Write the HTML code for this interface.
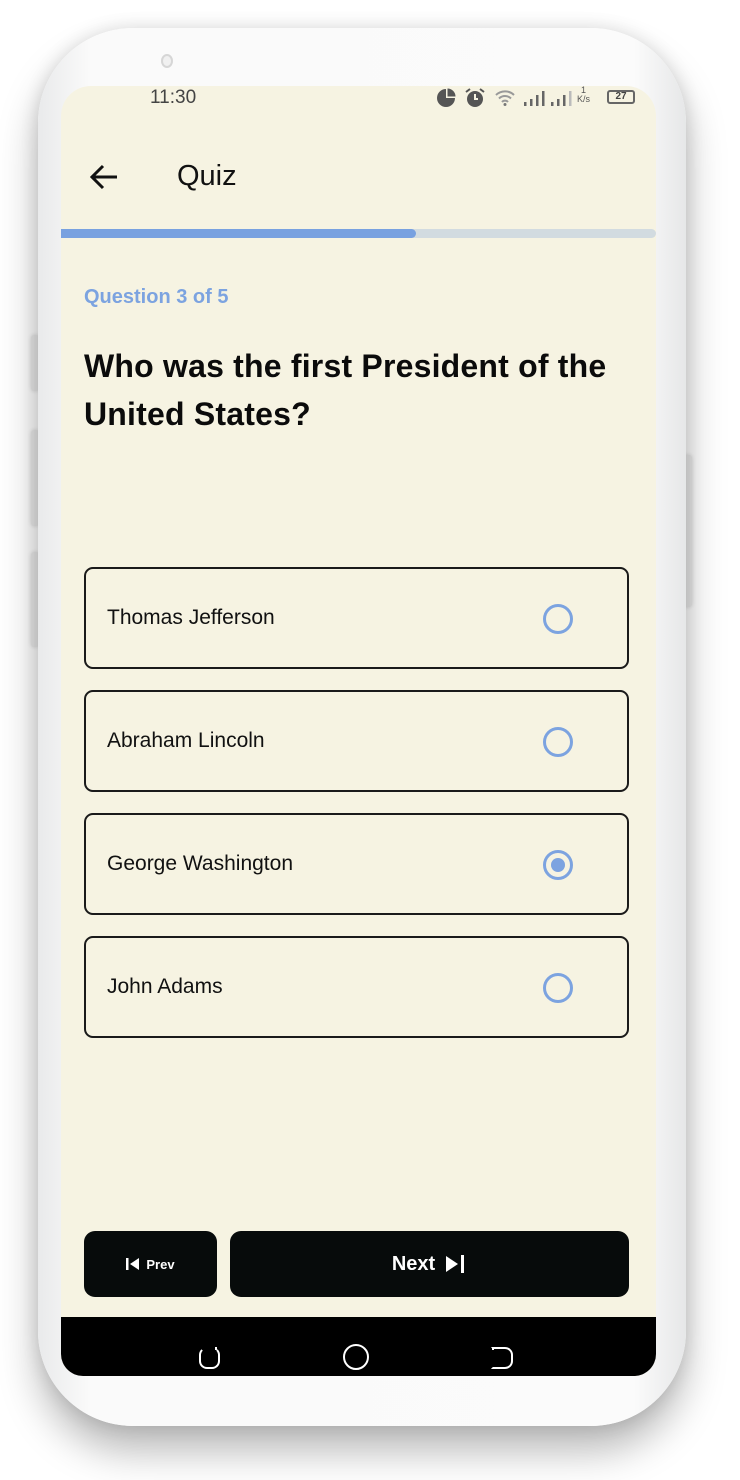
<!DOCTYPE html>
<html><head><meta charset="utf-8"><style>
*{margin:0;padding:0;box-sizing:border-box}
body{width:740px;height:1480px;background:#fff;position:relative;overflow:hidden;font-family:"Liberation Sans",sans-serif}
.phone{position:absolute;left:38px;top:28px;width:648px;height:1398px;border-radius:95px;background:linear-gradient(90deg,#e9eaeb,#fafafa 8%,#fbfbfb 92%,#e6e7e8);box-shadow:0 25px 40px rgba(0,0,0,.28),0 0 18px rgba(0,0,0,.12)}
.btn{position:absolute;background:#ececec;border-radius:3px;box-shadow:0 0 4px rgba(0,0,0,.15)}
.screen{position:absolute;left:61px;top:86px;width:595px;height:1290px;background:#f6f3e2;border-radius:30px 30px 22px 22px;overflow:hidden}
.cam{position:absolute;left:161px;top:54px;width:12px;height:14px;border-radius:50%;background:#f0f0f0;border:2px solid #d6d6d6}
.abs{position:absolute}
.opt{position:absolute;left:23px;width:545px;height:102px;border:2px solid #1a1a1a;border-radius:9px;font-size:21px;color:#111;padding-left:21px;line-height:98px}
.opt .r{position:absolute;left:457px;top:35px;width:30px;height:30px;border:3px solid #7ca3e0;border-radius:50%}
.opt .r.s::after{content:"";position:absolute;left:5px;top:5px;width:14px;height:14px;border-radius:50%;background:#7ca3e0}
.b{position:absolute;background:#070b0b;border-radius:11px;color:#fff;font-weight:bold;display:flex;align-items:center;justify-content:center}
</style></head><body>
<div class="btn" style="left:31px;top:335px;width:8px;height:56px"></div>
<div class="btn" style="left:31px;top:430px;width:8px;height:96px"></div>
<div class="btn" style="left:31px;top:552px;width:8px;height:95px"></div>
<div class="btn" style="left:683px;top:455px;width:9px;height:152px"></div>
<div class="phone"></div>
<div class="cam"></div>
<div class="screen">
 <div class="abs" style="left:89px;top:1px;font-size:19px;color:#444">11:30</div>
 <svg class="abs" style="left:375px;top:2px" width="20" height="20" viewBox="0 0 20 20"><path d="M10 1a9 9 0 1 0 9 9h-9z" fill="#555"/><path d="M11.5 0.5v8h8a8 8 0 0 0-8-8z" fill="#555"/></svg>
 <svg class="abs" style="left:403px;top:1px" width="22" height="22" viewBox="0 0 22 22"><circle cx="11" cy="12" r="8" fill="#555"/><path d="M2 5l4-3M20 5l-4-3" stroke="#555" stroke-width="2"/><path d="M11 7v5h3" stroke="#f6f3e2" stroke-width="2" fill="none"/></svg>
 <svg class="abs" style="left:434px;top:4px" width="20" height="16" viewBox="0 0 20 16"><path d="M1 5a13 13 0 0 1 18 0M4 8.5a8.5 8.5 0 0 1 12 0M7 12a4 4 0 0 1 6 0" stroke="#999" stroke-width="2" fill="none"/><circle cx="10" cy="14.5" r="1.5" fill="#777"/></svg>
 <svg class="abs" style="left:462px;top:4px" width="24" height="16" viewBox="0 0 24 16"><rect x="1" y="12" width="2.5" height="4" fill="#666"/><rect x="7" y="9" width="2.5" height="7" fill="#666"/><rect x="13" y="5" width="2.5" height="11" fill="#666"/><rect x="19" y="1" width="2.5" height="15" fill="#666"/></svg>
 <svg class="abs" style="left:489px;top:4px" width="24" height="16" viewBox="0 0 24 16"><rect x="1" y="12" width="2.5" height="4" fill="#666"/><rect x="7" y="9" width="2.5" height="7" fill="#666"/><rect x="13" y="5" width="2.5" height="11" fill="#666"/><rect x="19" y="1" width="2.5" height="15" fill="#bbb"/></svg>
 <div class="abs" style="left:516px;top:0px;font-size:9px;color:#555;line-height:9px;text-align:center">1<br>K/s</div>
 <div class="abs" style="left:546px;top:4px;width:28px;height:14px;border:2px solid #666;border-radius:3px;font-size:10px;line-height:10px;color:#444;text-align:center;font-weight:bold">27</div>
 <svg class="abs" style="left:28px;top:78px" width="30" height="26" viewBox="0 0 30 26"><path d="M28 13H3M14 2L3 13l11 11" stroke="#111" stroke-width="3" fill="none"/></svg>
 <div class="abs" style="left:116px;top:74px;font-size:29px;color:#111">Quiz</div>
 <div class="abs" style="left:0;top:143px;width:595px;height:9px;background:#d2dbe0;border-radius:0 5px 5px 0"></div>
 <div class="abs" style="left:0;top:143px;width:355px;height:9px;background:#78a1e0;border-radius:0 5px 5px 0"></div>
 <div class="abs" style="left:23px;top:200px;font-size:20px;font-weight:bold;color:#7ca3e0">Question 3 of 5</div>
 <div class="abs" style="left:23px;top:256px;width:560px;font-size:32px;line-height:48px;color:#0b0b0b;font-weight:bold;letter-spacing:.2px">Who was the first President of the United States?</div>
 <div class="opt" style="top:481px">Thomas Jefferson<div class="r"></div></div>
 <div class="opt" style="top:604px">Abraham Lincoln<div class="r"></div></div>
 <div class="opt" style="top:727px">George Washington<div class="r s"></div></div>
 <div class="opt" style="top:850px">John Adams<div class="r"></div></div>
 <div class="b" style="left:23px;top:1145px;width:133px;height:66px;font-size:13px"><svg width="14" height="14" viewBox="0 0 14 14" style="margin-right:6px"><rect x="0" y="1" width="2.5" height="12" fill="#fff"/><path d="M13 1v12L4 7z" fill="#fff"/></svg>Prev</div>
 <div class="b" style="left:169px;top:1145px;width:399px;height:66px;font-size:20px">Next<svg width="22" height="20" viewBox="0 0 22 20" style="margin-left:10px"><path d="M1 2v16l12-8z" fill="#fff"/><rect x="16" y="1" width="3" height="18" fill="#fff"/></svg></div>
 <div class="abs" style="left:0;top:1231px;width:595px;height:60px;background:#000"></div>
 <div class="abs" style="left:138px;top:1261px;width:21px;height:22px;border:2px solid #fff;border-top-color:transparent;border-radius:8px"></div>
 <div class="abs" style="left:154px;top:1261px;width:2px;height:3px;background:#fff"></div>
 <div class="abs" style="left:282px;top:1258px;width:26px;height:26px;border:2px solid #fff;border-radius:50%"></div>
 <div class="abs" style="left:430px;top:1261px;width:22px;height:22px;border:2px solid #fff;border-left-color:transparent;border-radius:0 8px 8px 0"></div>
 <div class="abs" style="left:431px;top:1261px;width:2px;height:3px;background:#fff"></div>
</div>
</body></html>
